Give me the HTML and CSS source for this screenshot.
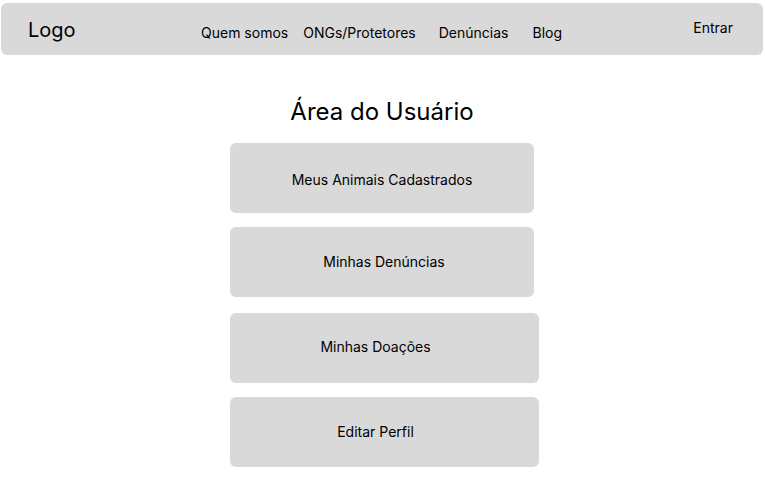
FILE: index.html
```html
<!DOCTYPE html>
<html lang="pt">
<head>
<meta charset="utf-8">
<title>Área do Usuário</title>
<link rel="stylesheet" href="styles.css">
</head>
<body>
<header class="topbar">
  <div class="logo">Logo</div>
  <nav class="nav">
    <a class="nav-link" href="#">Quem somos</a>
    <a class="nav-link nav-ongs" href="#">ONGs/Protetores</a>
    <a class="nav-link nav-den" href="#">Denúncias</a>
    <a class="nav-link nav-blog" href="#">Blog</a>
  </nav>
  <a class="login" href="#">Entrar</a>
</header>
<main class="content">
  <h1 class="title">Área do Usuário</h1>
  <div class="actions">
    <a class="action action-a" href="#">Meus Animais Cadastrados</a>
    <a class="action action-b" href="#">Minhas Denúncias</a>
    <a class="action action-c" href="#">Minhas Doações</a>
    <a class="action action-d" href="#">Editar Perfil</a>
  </div>
</main>
</body>
</html>
```
FILE: styles.css
```css
* { box-sizing: border-box; }
html, body { margin: 0; padding: 0; background: #fff; }
body {
  font-family: Inter, "Noto Sans", sans-serif;
  color: #000;
}
a { color: inherit; text-decoration: none; }

.topbar {
  margin: 3px 2px 0 1px;
  height: 52px;
  background: #d9d9d9;
  border-radius: 6px;
  display: flex;
  align-items: flex-start;
  padding-left: 27px;
}
.logo {
  font-size: 20px;
  line-height: 24px;
  margin-top: 15px;
  width: 47px;
}
.nav {
  display: flex;
  margin-left: 126px;
  margin-top: 21px;
  font-size: 14px;
  line-height: 17px;
}
.nav-ongs { margin-left: 15px; }
.nav-den { margin-left: 23px; }
.nav-blog { margin-left: 24px; }
.login {
  margin-left: auto;
  margin-right: 30px;
  margin-top: 16px;
  font-size: 14px;
  line-height: 17px;
}

.content { display: flex; flex-direction: column; }
.title {
  margin: 42px 0 0;
  text-align: center;
  font-size: 24px;
  line-height: 29px;
  font-weight: 400;
  padding-right: 1px;
}
.actions {
  display: flex;
  flex-direction: column;
  align-items: flex-start;
  padding-left: 230px;
  margin-top: 17px;
}
.action {
  display: flex;
  align-items: center;
  justify-content: center;
  height: 70px;
  background: #d9d9d9;
  border-radius: 6px;
  font-size: 14px;
  line-height: 17px;
}
.action-a { width: 304px; padding-top: 2px; }
.action-b { width: 304px; margin-top: 14px; padding-left: 4px; padding-bottom: 2px; }
.action-c { width: 309px; margin-top: 16px; padding-right: 18px; padding-bottom: 4px; }
.action-d { width: 309px; margin-top: 14px; padding-right: 18px; padding-bottom: 2px; }
```
